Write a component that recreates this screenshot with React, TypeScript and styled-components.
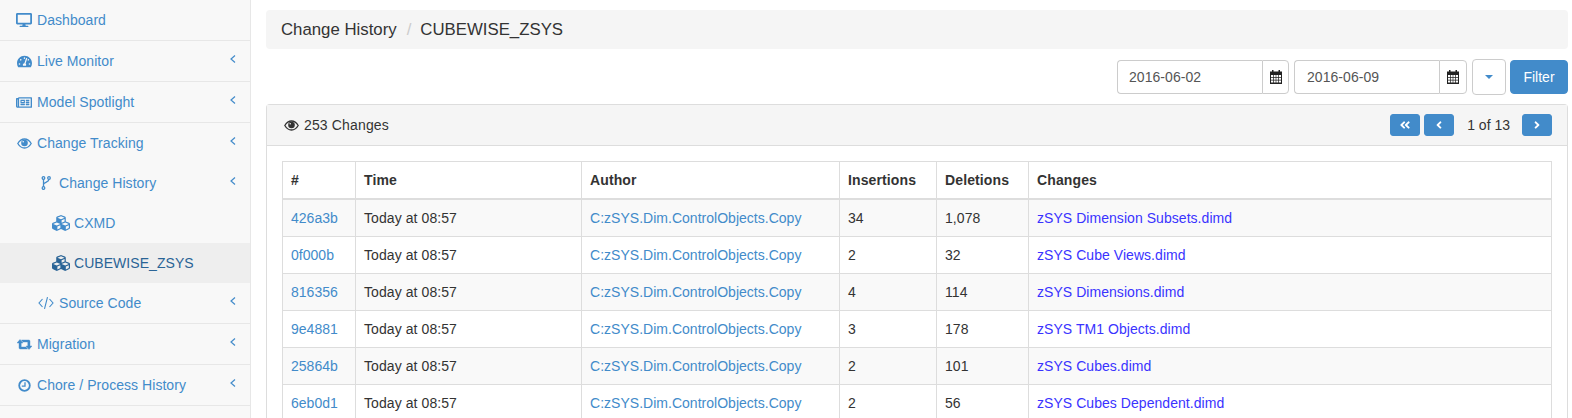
import React from "react";
import styled, { createGlobalStyle } from "styled-components";
import { FaDesktop, FaTachometerAlt, FaRegNewspaper, FaCubes, FaAngleLeft, FaAngleRight, FaAngleDoubleLeft } from "react-icons/fa";

const Global = createGlobalStyle`
  html, body { margin: 0; padding: 0; height: 418px; overflow: hidden; background: #fff; }
  body { font-family: "Liberation Sans", Arial, sans-serif; font-size: 14px; line-height: 20px; color: #333; }
  * { box-sizing: border-box; }
`;

const Page = styled.div`
  display: grid;
  grid-template-columns: 251px 1fr;
  height: 418px;
  overflow: hidden;
`;

const Sidebar = styled.nav`
  background: #f8f8f8;
  border-right: 1px solid #e7e7e7;
  height: 418px;
`;

const NavRow = styled.div<{ $level?: number; $active?: boolean; $noBorder?: boolean }>`
  position: relative;
  display: flex;
  align-items: center;
  height: ${(p) => (p.$noBorder ? 40 : 41)}px;
  padding-left: ${(p) => (p.$level === 2 ? 52 : p.$level === 1 ? 40 : 16)}px;
  background: ${(p) => (p.$active ? "#eeeeee" : "transparent")};
  border-bottom: ${(p) => (p.$noBorder ? "none" : "1px solid #e7e7e7")};
  color: ${(p) => (p.$active ? "#2a6496" : "#428bca")};
  letter-spacing: 0.05px;
`;

const NavIcon = styled.span<{ $w?: number; $size?: number }>`
  display: inline-flex;
  justify-content: center;
  align-items: center;
  width: ${(p) => p.$w ?? 16}px;
  margin-right: ${(p) => (p.$w ? 4 : 5)}px;
  font-size: ${(p) => p.$size ?? 14}px;
`;

const Arrow = styled.svg`
  position: absolute;
  right: 14px;
  top: 14px;
  width: 6px;
  height: 8px;
  fill: none;
  stroke: #428bca;
  stroke-width: 1.2;
`;

const Main = styled.main`
  padding: 10px 4px 0 15px;
  min-width: 0;
`;

const Breadcrumb = styled.div`
  display: flex;
  align-items: center;
  height: 39px;
  padding: 0 15px;
  background: #f5f5f5;
  border-radius: 4px;
  font-size: 16.8px;
`;

const Sep = styled.span`
  color: #ccc;
  padding: 0 9px 0 10px;
`;

const Toolbar = styled.div`
  display: flex;
  justify-content: flex-end;
  align-items: center;
  margin-top: 10px;
  height: 36px;
`;

const DateGroup = styled.div`
  display: flex;
  height: 34px;
  margin-right: 5px;
`;

const DateInput = styled.div<{ $w: number; $pad: number }>`
  width: ${(p) => p.$w}px;
  padding: 6px ${(p) => p.$pad}px;
  border: 1px solid #ccc;
  border-right: none;
  border-radius: 4px 0 0 4px;
  color: #555;
  background: #fff;
  letter-spacing: 0.05px;
`;

const Addon = styled.div<{ $w: number }>`
  display: flex;
  align-items: center;
  justify-content: center;
  width: ${(p) => p.$w}px;
  border: 1px solid #ccc;
  border-radius: 0 4px 4px 0;
`;

const CaretButton = styled.button`
  width: 34px;
  height: 36px;
  margin-right: 4px;
  padding: 0;
  display: flex;
  align-items: center;
  justify-content: center;
  background: #fff;
  border: 1px solid #ccc;
  border-radius: 4px;
`;

const Caret = styled.span`
  width: 0;
  height: 0;
  border-left: 4px solid transparent;
  border-right: 4px solid transparent;
  border-top: 4px solid #428bca;
`;

const FilterButton = styled.button`
  width: 58px;
  height: 34px;
  padding: 0;
  background: #428bca;
  border: 1px solid #428bca;
  border-radius: 4px;
  color: #fff;
  font: inherit;
`;

const Panel = styled.section`
  margin-top: 9px;
  border: 1px solid #ddd;
  border-radius: 4px 4px 0 0;
  border-bottom: none;
`;

const PanelHeading = styled.header`
  display: flex;
  align-items: center;
  height: 41px;
  padding: 0 15px 0 17px;
  background: #f5f5f5;
  border-bottom: 1px solid #ddd;
`;

const HeadingTitle = styled.span`
  display: flex;
  align-items: center;
  gap: 5px;
  flex: 1;
  letter-spacing: 0.15px;
`;

const Pager = styled.div`
  display: flex;
  align-items: center;
`;

const PageButton = styled.button`
  width: 30px;
  height: 22px;
  padding: 0;
  display: flex;
  align-items: center;
  justify-content: center;
  background: #428bca;
  border: 1px solid #428bca;
  border-radius: 3px;
  color: #fff;
  font-size: 12px;
  margin-right: 4px;
  &:last-child { margin-right: 0; }
`;

const PageLabel = styled.span`
  margin: 0 12px 0 9px;
`;

const PanelBody = styled.div`
  padding: 15px;
`;

const Table = styled.table`
  width: 100%;
  border-collapse: collapse;
  border-spacing: 0;
  table-layout: fixed;
  border: 1px solid #ddd;
`;

const Th = styled.th<{ $w?: number }>`
  width: ${(p) => (p.$w ? `${p.$w}px` : "auto")};
  height: 37px;
  padding: 8px;
  text-align: left;
  font-weight: 700;
  border: 1px solid #ddd;
  border-bottom: 2px solid #ddd;
  letter-spacing: 0.12px;
`;

const Tr = styled.tr`
  &:nth-child(odd) { background: #f9f9f9; }
`;

const Td = styled.td`
  height: 37px;
  padding: 8px;
  border: 1px solid #ddd;
  letter-spacing: 0.08px;
`;

const Link = styled.a`
  color: #428bca;
  text-decoration: none;
  letter-spacing: 0.02px;
`;

const FileLink = styled.a`
  color: #3a33ff;
  text-decoration: none;
  letter-spacing: 0.05px;
`;

const CalendarIcon = () => (
  <svg width="12" height="14" viewBox="0 0 12 14" aria-hidden="true">
    <path fill="#222" d="M2 0h1.500v1.500h5V0H10v1.500h2V14H0V1.500h2z" />
    <path
      fill="#fff"
      d="M1 5h2v2H1zM3.700 5h2v2h-2zM6.300 5h2v2h-2zM9 5h2v2H9zM1 7.800h2v2H1zM3.700 7.800h2v2h-2zM6.300 7.800h2v2h-2zM9 7.800h2v2H9zM1 10.600h2v2H1zM3.700 10.600h2v2h-2zM6.300 10.600h2v2h-2zM9 10.600h2v2H9z"
    />
  </svg>
);

const EyeIcon = () => (
  <svg width="15" height="11" viewBox="0 0 15 11" aria-hidden="true">
    <path
      fill="none"
      stroke="currentColor"
      strokeWidth="1.300"
      d="M.8 5.500C2.500 2.600 4.800 1 7.500 1s5 1.600 6.700 4.500C12.500 8.400 10.200 10 7.500 10S2.500 8.400.8 5.500z"
    />
    <circle cx="7.500" cy="5" r="3.300" fill="currentColor" />
    <circle cx="6.200" cy="3.700" r="0.800" fill="#f8f8f8" />
  </svg>
);

const ForkIcon = () => (
  <svg width="15" height="14" viewBox="0 0 15 14" aria-hidden="true">
    <g fill="none" stroke="currentColor" strokeWidth="1.300">
      <circle cx="3.500" cy="2" r="1.300" />
      <circle cx="3.500" cy="12" r="1.300" />
      <circle cx="9" cy="2" r="1.300" />
      <path d="M3.500 3.300v7.400M9 3.300c0 3-5.500 3-5.500 5.200" />
    </g>
  </svg>
);

const CodeIcon = () => (
  <svg width="15" height="12" viewBox="0 0 15 12" overflow="visible" aria-hidden="true">
    <g fill="none" stroke="currentColor" strokeWidth="1.100">
      <path d="M2.500 2-1 6l3.500 4M9.500 2 13 6l-3.500 4M7.500.2 4.500 11.800" />
    </g>
  </svg>
);

const RetweetIcon = () => (
  <svg width="15" height="11" viewBox="0 0 15 11" aria-hidden="true">
    <g fill="currentColor" stroke="currentColor" strokeWidth="0.400">
      <path d="M0 4 3 .5 6 4H4.200v4H9l1.600 2H3.200a1.200 1.200 0 0 1-1.200-1.200V4z" />
      <path d="M15 7l-3 3.500L9 7h1.800V3H6L4.400 1h7.400A1.200 1.200 0 0 1 13 2.200V7z" />
    </g>
  </svg>
);

const ClockIcon = () => (
  <svg width="13" height="13" viewBox="0 0 13 13" aria-hidden="true">
    <circle cx="6.500" cy="6.500" r="5.300" fill="none" stroke="currentColor" strokeWidth="1.800" />
    <path fill="none" stroke="currentColor" strokeWidth="1.300" d="M7 3.200V7.200H3.800" />
  </svg>
);

const ArrowIcon = () => (
  <Arrow viewBox="0 0 6 8" aria-hidden="true">
    <path d="M5 .5 1 4l4 3.500" />
  </Arrow>
);

const rows = [
  ["426a3b", "34", "1,078", "zSYS Dimension Subsets.dimd"],
  ["0f000b", "2", "32", "zSYS Cube Views.dimd"],
  ["816356", "4", "114", "zSYS Dimensions.dimd"],
  ["9e4881", "3", "178", "zSYS TM1 Objects.dimd"],
  ["25864b", "2", "101", "zSYS Cubes.dimd"],
  ["6eb0d1", "2", "56", "zSYS Cubes Dependent.dimd"],
];

export default function App() {
  return (
    <Page>
      <Global />
      <Sidebar>
        <NavRow><NavIcon $size={16}><FaDesktop /></NavIcon>Dashboard</NavRow>
        <NavRow><NavIcon $size={15}><FaTachometerAlt /></NavIcon>Live Monitor<ArrowIcon /></NavRow>
        <NavRow><NavIcon $size={17}><FaRegNewspaper /></NavIcon>Model Spotlight<ArrowIcon /></NavRow>
        <NavRow $noBorder><NavIcon><EyeIcon /></NavIcon>Change Tracking<ArrowIcon /></NavRow>
        <NavRow $noBorder $level={1}><NavIcon $w={15}><ForkIcon /></NavIcon>Change History<ArrowIcon /></NavRow>
        <NavRow $noBorder $level={2}><NavIcon $w={18} $size={18}><FaCubes /></NavIcon>CXMD</NavRow>
        <NavRow $noBorder $level={2} $active><NavIcon $w={18} $size={18}><FaCubes /></NavIcon>CUBEWISE_ZSYS</NavRow>
        <NavRow $level={1}><NavIcon $w={15}><CodeIcon /></NavIcon>Source Code<ArrowIcon /></NavRow>
        <NavRow><NavIcon><RetweetIcon /></NavIcon>Migration<ArrowIcon /></NavRow>
        <NavRow><NavIcon><ClockIcon /></NavIcon>Chore / Process History<ArrowIcon /></NavRow>
      </Sidebar>
      <Main>
        <Breadcrumb>Change History<Sep>/</Sep>CUBEWISE_ZSYS</Breadcrumb>
        <Toolbar>
          <DateGroup>
            <DateInput $w={145} $pad={11}>2016-06-02</DateInput>
            <Addon $w={27}><CalendarIcon /></Addon>
          </DateGroup>
          <DateGroup>
            <DateInput $w={145} $pad={12}>2016-06-09</DateInput>
            <Addon $w={28}><CalendarIcon /></Addon>
          </DateGroup>
          <CaretButton aria-label="Options"><Caret /></CaretButton>
          <FilterButton>Filter</FilterButton>
        </Toolbar>
        <Panel>
          <PanelHeading>
            <HeadingTitle><EyeIcon />253 Changes</HeadingTitle>
            <Pager>
              <PageButton aria-label="First"><FaAngleDoubleLeft /></PageButton>
              <PageButton aria-label="Previous"><FaAngleLeft /></PageButton>
              <PageLabel>1 of 13</PageLabel>
              <PageButton aria-label="Next"><FaAngleRight /></PageButton>
            </Pager>
          </PanelHeading>
          <PanelBody>
            <Table>
              <thead>
                <tr>
                  <Th $w={73}>#</Th>
                  <Th $w={226}>Time</Th>
                  <Th $w={258}>Author</Th>
                  <Th $w={97}>Insertions</Th>
                  <Th $w={92}>Deletions</Th>
                  <Th>Changes</Th>
                </tr>
              </thead>
              <tbody>
                {rows.map((r) => (
                  <Tr key={r[0]}>
                    <Td><Link>{r[0]}</Link></Td>
                    <Td>Today at 08:57</Td>
                    <Td><Link>C:zSYS.Dim.ControlObjects.Copy</Link></Td>
                    <Td>{r[1]}</Td>
                    <Td>{r[2]}</Td>
                    <Td><FileLink>{r[3]}</FileLink></Td>
                  </Tr>
                ))}
              </tbody>
            </Table>
          </PanelBody>
        </Panel>
      </Main>
    </Page>
  );
}
